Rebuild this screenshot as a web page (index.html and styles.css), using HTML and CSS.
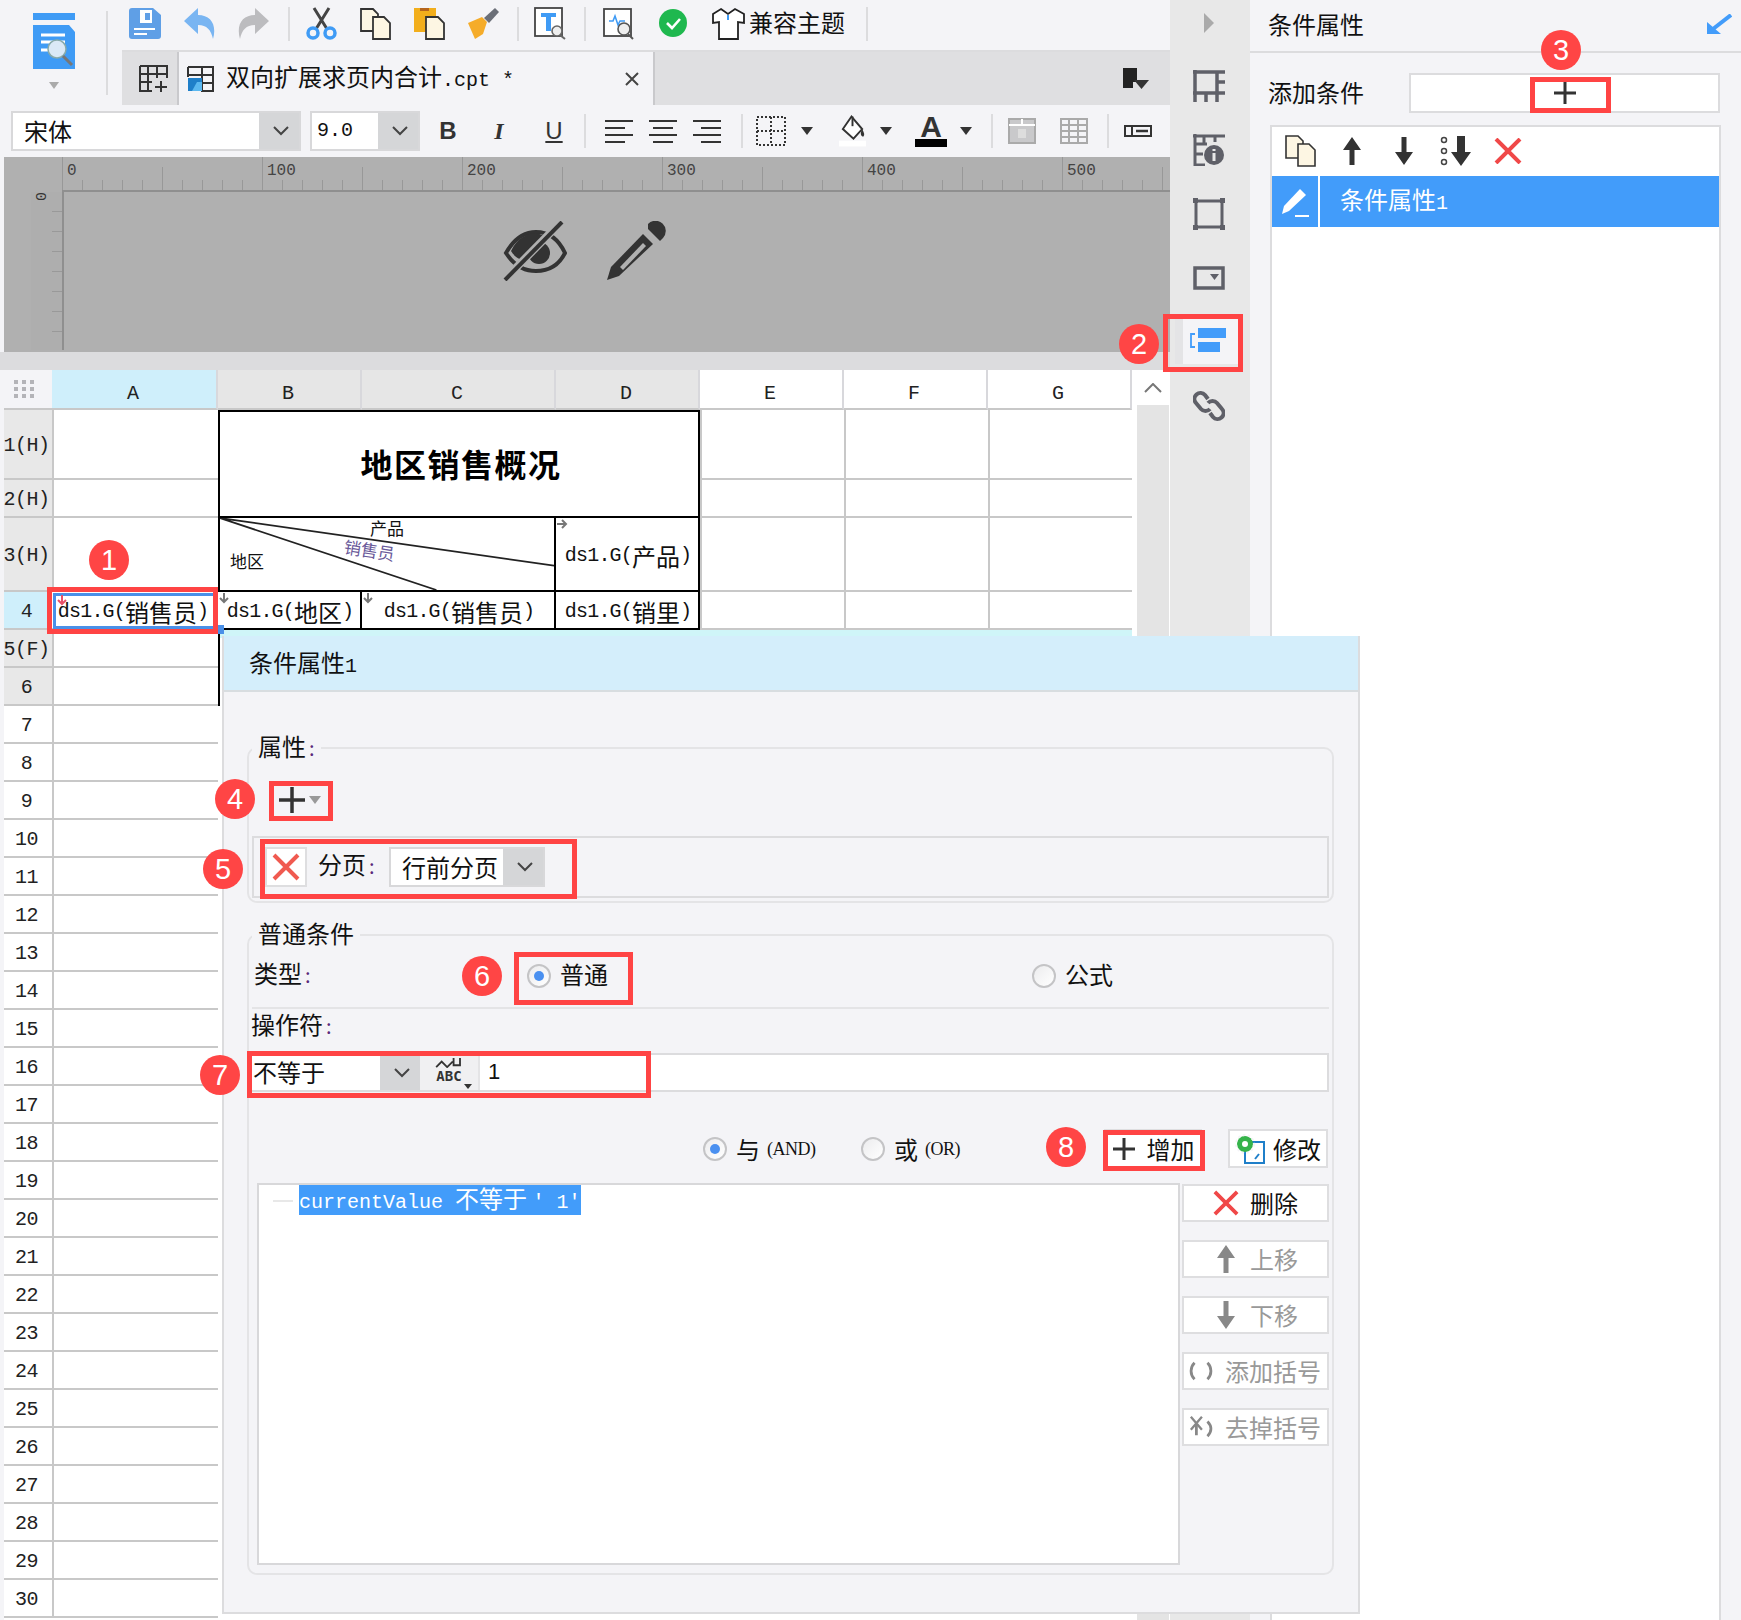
FILE: index.html
```html
<!DOCTYPE html>
<html lang="zh-CN">
<head>
<meta charset="utf-8">
<title>条件属性</title>
<link rel="stylesheet" href="styles.css">
</head>
<body>
<div class="app">
  <main class="left">
    <div class="top">
      <div class="logo-block">
        <div class="logo-col">
          <svg class="logo" viewBox="0 0 42 56"><rect width="42" height="7" fill="#3f9bf5"/><path d="M0 12h36l6 7v37H0z" fill="#3f9bf5"/><path d="M8 22h24M8 29h24M8 37h24" stroke="#fff" stroke-width="3"/><circle cx="24" cy="36" r="9" fill="#dbe9f6" stroke="#8aa" stroke-width="1.5"/><path d="M30 43l9 9" stroke="#777" stroke-width="3"/></svg>
          <span class="tri tri-light"></span>
        </div>
        <span class="sep sep-logo"></span>
      </div>
      <div class="top-main">
        <div class="toolbar">
          <svg class="ic" viewBox="0 0 33 33"><path d="M3 1h21l8 7v21a3 3 0 0 1-3 3H3a3 3 0 0 1-3-3V4a3 3 0 0 1 3-3z" fill="#5f9fe6"/><rect x="11" y="3" width="12" height="13" fill="#fff"/><rect x="16" y="6" width="5" height="7" fill="#5f9fe6"/><path d="M5 22h21M5 27h13" stroke="#fff" stroke-width="2.200"/></svg>
          <svg class="ic" viewBox="0 0 33 33"><path d="M15 1L1 14l14 13v-9c9 0 13 5 15 14 4-14-2-24-15-24z" fill="#79b5f2"/></svg>
          <svg class="ic" viewBox="0 0 33 33"><path d="M18 1l14 13-14 13v-9C9 18 5 23 3 32-1 18 5 8 18 8z" fill="#bcbcbf"/></svg>
          <span class="sep sep-a"></span>
          <svg class="ic" viewBox="0 0 33 33"><path d="M9 1l13 21M24 1L11 22" stroke="#444" stroke-width="3" fill="none"/><circle cx="8" cy="26" r="5" fill="none" stroke="#3f9bf5" stroke-width="3.500"/><circle cx="25" cy="26" r="5" fill="none" stroke="#3f9bf5" stroke-width="3.500"/></svg>
          <svg class="ic" viewBox="0 0 33 33"><path d="M2 2h12l5 5v17H2z" fill="#fdf6e3" stroke="#333" stroke-width="1.800"/><path d="M14 10h11l6 6v16H14z" fill="#fdf6e3" stroke="#333" stroke-width="1.800"/></svg>
          <svg class="ic" viewBox="0 0 33 33"><rect x="1" y="1" width="22" height="24" fill="#f2ae1c"/><rect x="7" y="1" width="9" height="3" fill="#b5651d"/><path d="M13 10h12l6 6v16H13z" fill="#fdf6e3" stroke="#333" stroke-width="1.800"/></svg>
          <svg class="ic" viewBox="0 0 33 33"><path d="M1 16l14-6 5 5-4 12-8 5z" fill="#f5ac2a"/><path d="M17 11L28 1l4 4-10 11z" fill="#6b6f78"/></svg>
          <span class="sep sep-b"></span>
          <svg class="ic" viewBox="0 0 33 33"><rect x="1" y="1" width="27" height="28" fill="#fff" stroke="#444" stroke-width="1.800"/><path d="M7 6h15v4h-5v14h-5V10H7z" fill="#3f9bf5"/><circle cx="23" cy="24" r="5" fill="#eee" stroke="#666" stroke-width="1.600"/><path d="M26 28l5 4" stroke="#666" stroke-width="2"/></svg>
          <span class="sep sep-b"></span>
          <svg class="ic ic-shift" viewBox="0 0 33 33"><rect x="1" y="2" width="27" height="27" fill="#fff" stroke="#444" stroke-width="1.800"/><path d="M6 14h4l2-5 3 9 2-4h5" fill="none" stroke="#3f9bf5" stroke-width="1.600"/><circle cx="21" cy="22" r="6" fill="#eee" stroke="#555" stroke-width="1.600"/><path d="M25 27l5 5" stroke="#555" stroke-width="2"/></svg>
          <svg class="ic" viewBox="0 0 33 33"><circle cx="16" cy="16" r="14" fill="#1fb84f"/><path d="M10 16l5 5 8-9" fill="none" stroke="#fff" stroke-width="2.600"/></svg>
          <svg class="ic ic-tight" viewBox="0 0 33 33"><path d="M9 2l7 5 7-5 9 5v9l-6-1v17H7V15l-6 1V7z" fill="#fff" stroke="#222" stroke-width="1.800"/><path d="M16 8v5" stroke="#3f9bf5" stroke-width="2"/></svg>
          <span class="tool-text">兼容主题</span>
          <span class="sep sep-c"></span>
        </div>
        <div class="tabs">
          <div class="tab-add"><svg class="ic-add" viewBox="0 0 30 28"><path d="M1 1h27v12M1 1v25h12M1 9h27M9 1v25M18 1v12M1 17h12" fill="none" stroke="#333" stroke-width="2"/><path d="M22 16v11M16 22h12" stroke="#333" stroke-width="2"/></svg></div>
          <div class="tab">
            <svg class="ic-file" viewBox="0 0 27 26"><path d="M1 1h25v24H15V1M1 9h25M15 17h11M1 1v10" fill="none" stroke="#333" stroke-width="2"/><path d="M1 12h14v13H1z" fill="#1f7fc9"/><path d="M5 25l5-9h5v9z" fill="#5bb8f0"/></svg>
            <span class="tab-name">双向扩展求页内合计<span class="m">.cpt *</span></span>
            <svg class="tab-close" viewBox="0 0 14 14"><path d="M1 1l12 12M13 1L1 13" stroke="#444" stroke-width="2"/></svg>
          </div>
          <svg class="tab-menu" viewBox="0 0 26 22"><path d="M0 0h14v14H10v6H0z" fill="#222"/><path d="M11 12h15l-7.500 9z" fill="#333"/></svg>
        </div>
      </div>
    </div>

    <div class="format">
      <div class="combo combo-font"><span class="combo-val">宋体</span><span class="combo-arrow"><svg class="chev" viewBox="0 0 16 10"><path d="M1 1l7 7 7-7" fill="none" stroke="#444" stroke-width="2"/></svg></span></div>
      <div class="combo combo-size"><span class="combo-val m">9.0</span><span class="combo-arrow"><svg class="chev" viewBox="0 0 16 10"><path d="M1 1l7 7 7-7" fill="none" stroke="#444" stroke-width="2"/></svg></span></div>
      <span class="fb fb-b">B</span>
      <span class="fb fb-i">I</span>
      <span class="fb fb-u">U</span>
      <span class="sep sep-f1"></span>
      <div class="aligns">
        <svg class="al" viewBox="0 0 30 24"><path d="M1 2h28M1 9h20M1 16h28M1 23h20" stroke="#333" stroke-width="2"/></svg>
        <svg class="al" viewBox="0 0 30 24"><path d="M1 2h28M5 9h20M1 16h28M5 23h20" stroke="#333" stroke-width="2"/></svg>
        <svg class="al" viewBox="0 0 30 24"><path d="M1 2h28M9 9h20M1 16h28M9 23h20" stroke="#333" stroke-width="2"/></svg>
      </div>
      <span class="sep sep-f2"></span>
      <svg class="ic-border" viewBox="0 0 30 30"><path d="M1 1h28v28H1zM15 1v28M1 15h28" fill="none" stroke="#333" stroke-width="2" stroke-dasharray="2 2"/></svg>
      <span class="tri tri-a"></span>
      <svg class="ic-bucket" viewBox="0 0 28 32"><path d="M13 1l11 13-9 10L4 14z" fill="#fff" stroke="#333" stroke-width="2"/><path d="M14 1v10" stroke="#333" stroke-width="2"/><path d="M24 14c2 4 3 6 1 8-3-1-3-4-1-8z" fill="#333"/><rect y="26" width="28" height="6" fill="#fff"/></svg>
      <span class="tri tri-b"></span>
      <span class="font-color"><span class="font-a">A</span><span class="font-bar"></span></span>
      <span class="tri tri-c"></span>
      <span class="sep sep-f3"></span>
      <svg class="ic-page" viewBox="0 0 28 26"><rect x="1" y="1" width="26" height="24" fill="#c9c9cb" stroke="#aaa" stroke-width="2"/><path d="M1 7h26M14 1v6" stroke="#fff" stroke-width="2"/><rect x="10" y="11" width="8" height="9" fill="#ddd"/></svg>
      <svg class="ic-table" viewBox="0 0 28 26"><path d="M1 1h26v24H1zM1 7h26M1 13h26M1 19h26M9 1v24M18 1v24" fill="none" stroke="#aaa" stroke-width="2"/></svg>
      <span class="sep sep-f4"></span>
      <svg class="ic-field" viewBox="0 0 28 12"><rect x="1" y="1" width="26" height="10" fill="none" stroke="#333" stroke-width="2"/><path d="M8 1v10" stroke="#333" stroke-width="2"/><path d="M12 6h12" stroke="#333" stroke-width="2.500"/></svg>
    </div>

    <section class="canvas">
      <div class="ruler-h">
        <span class="rl m">0</span><span class="rl m">100</span><span class="rl m">200</span><span class="rl m">300</span><span class="rl m">400</span><span class="rl m">500</span>
      </div>
      <div class="canvas-body">
        <div class="ruler-v"><span class="rv0 m">0</span></div>
        <div class="canvas-icons">
          <svg class="ic-eye" viewBox="0 0 64 60"><path d="M3 32C12 16 22 11 33 11s22 6 29 21C55 46 44 50 33 50S12 46 3 32z" fill="none" stroke="#333" stroke-width="4"/><path d="M8 30C14 17 24 12 34 12l10 4-24 24C14 37 10 34 8 30z" fill="#333"/><circle cx="36" cy="32" r="11" fill="#333"/><path d="M1 59L58 1" stroke="#b0b0b0" stroke-width="8"/><path d="M2 59L59 1" stroke="#333" stroke-width="4"/></svg>
          <svg class="ic-pen" viewBox="0 0 60 60"><path d="M42 3a8 8 0 0 1 15 14l-3 3-12-12z" fill="#333"/><path d="M37 13l10 10L13 55 1 59l4-13z" fill="#333"/><path d="M37 22l3 3-23 24-3-3z" fill="#b0b0b0"/></svg>
        </div>
      </div>
      <div class="strip"></div>
    </section>

    <section class="sheet">
      <div class="grid">
        <div class="corner"><svg class="dots" viewBox="0 0 20 18"><path d="M0 0h4v4H0zM8 0h4v4H8zM16 0h4v4h-4zM0 7h4v4H0zM8 7h4v4H8zM16 7h4v4h-4zM0 14h4v4H0zM8 14h4v4H8zM16 14h4v4h-4z" fill="#b4b4b8"/></svg></div>
        <div class="ch ch-on m">A</div><div class="ch m">B</div><div class="ch m">C</div><div class="ch m">D</div><div class="ch ch-plain m">E</div><div class="ch ch-plain m">F</div><div class="ch ch-plain m">G</div>

        <div class="title">地区销售概况</div>
        <div class="under"></div>

        <div class="rh m">1(H)</div><div class="c"></div><div class="c"></div><div class="c"></div><div class="c"></div>
        <div class="rh m">2(H)</div><div class="c"></div><div class="c"></div><div class="c"></div><div class="c"></div>
        <div class="rh m">3(H)</div><div class="c"></div>
        <div class="diag">
          <svg class="diag-lines" viewBox="0 0 338 74" preserveAspectRatio="none"><path d="M0 0L338 49M0 0L219 74" stroke="#222" stroke-width="1.800" fill="none"/></svg>
          <span class="d-prod">产品</span><span class="d-sale">销售员</span><span class="d-area">地区</span>
        </div>
        <div class="bc"><svg class="mark" viewBox="0 0 12 12"><path d="M1 6h8M6 2l4 4-4 4" fill="none" stroke="#777" stroke-width="2"/></svg><span class="m">ds1.G(</span>产品<span class="m">)</span></div><div class="c"></div><div class="c"></div><div class="c"></div>

        <div class="rh rh-on m">4</div>
        <div class="c c-sel"><svg class="mark mark-red" viewBox="0 0 12 12"><path d="M6 1v8M2 6l4 4 4-4" fill="none" stroke="#e8506a" stroke-width="2"/></svg><span class="m">ds1.G(</span>销售员<span class="m">)</span></div>
        <div class="bc"><svg class="mark" viewBox="0 0 12 12"><path d="M6 1v8M2 6l4 4 4-4" fill="none" stroke="#777" stroke-width="2"/></svg><span class="m">ds1.G(</span>地区<span class="m">)</span></div>
        <div class="bc"><svg class="mark" viewBox="0 0 12 12"><path d="M6 1v8M2 6l4 4 4-4" fill="none" stroke="#777" stroke-width="2"/></svg><span class="m">ds1.G(</span>销售员<span class="m">)</span></div>
        <div class="bc"><span class="m">ds1.G(</span>销里<span class="m">)</span></div>
        <div class="c"></div><div class="c"></div><div class="c"></div>

        <div class="rh m">5(F)</div><div class="c"></div>
        <div class="rh m">6</div><div class="c"></div>
        <div class="rh rh-w m">7</div><div class="c"></div>
        <div class="rh rh-w m">8</div><div class="c"></div>
        <div class="rh rh-w m">9</div><div class="c"></div>
        <div class="rh rh-w m">10</div><div class="c"></div>
        <div class="rh rh-w m">11</div><div class="c"></div>
        <div class="rh rh-w m">12</div><div class="c"></div>
        <div class="rh rh-w m">13</div><div class="c"></div>
        <div class="rh rh-w m">14</div><div class="c"></div>
        <div class="rh rh-w m">15</div><div class="c"></div>
        <div class="rh rh-w m">16</div><div class="c"></div>
        <div class="rh rh-w m">17</div><div class="c"></div>
        <div class="rh rh-w m">18</div><div class="c"></div>
        <div class="rh rh-w m">19</div><div class="c"></div>
        <div class="rh rh-w m">20</div><div class="c"></div>
        <div class="rh rh-w m">21</div><div class="c"></div>
        <div class="rh rh-w m">22</div><div class="c"></div>
        <div class="rh rh-w m">23</div><div class="c"></div>
        <div class="rh rh-w m">24</div><div class="c"></div>
        <div class="rh rh-w m">25</div><div class="c"></div>
        <div class="rh rh-w m">26</div><div class="c"></div>
        <div class="rh rh-w m">27</div><div class="c"></div>
        <div class="rh rh-w m">28</div><div class="c"></div>
        <div class="rh rh-w m">29</div><div class="c"></div>
        <div class="rh rh-w m">30</div><div class="c"></div>
      </div>
      <div class="vscroll">
        <div class="vs-up"><svg class="vs-chev" viewBox="0 0 18 10"><path d="M1 9l8-8 8 8" fill="none" stroke="#777" stroke-width="2"/></svg></div>
        <div class="vs-track"></div>
      </div>
    </section>
  </main>

  <nav class="sidebar">
    <span class="side-tri"></span>
    <div class="side-item"><svg class="side-ic" viewBox="0 0 32 32"><path d="M0 2h32M2 0v32M0 23h32M24 2v21M24 12h8M13 23v9M24 23v9" fill="none" stroke="#5f6068" stroke-width="3.500"/></svg></div>
    <div class="side-item"><svg class="side-ic" viewBox="0 0 32 32"><path d="M0 2h32M2 0v31h10M2 10h12M2 20h8M11 2v8M22 2v6" fill="none" stroke="#5f6068" stroke-width="3"/><circle cx="21" cy="21" r="10" fill="#5f6068"/><path d="M21 15v2M21 19v8" stroke="#e8e8e8" stroke-width="3"/></svg></div>
    <div class="side-item"><svg class="side-ic" viewBox="0 0 32 32"><rect x="3" y="3" width="26" height="26" fill="none" stroke="#5f6068" stroke-width="3"/><path d="M0 0h5v5H0zM27 0h5v5h-5zM0 27h5v5H0zM27 27h5v5h-5z" fill="#5f6068"/></svg></div>
    <div class="side-item"><svg class="side-ic-wide" viewBox="0 0 32 24"><rect x="2" y="2" width="28" height="20" fill="none" stroke="#5f6068" stroke-width="3.500"/><path d="M17 8h9l-4.500 6z" fill="#5f6068"/></svg></div>
    <div class="side-item"><div class="side-active"><svg class="side-ic-blue" viewBox="0 0 36 24"><rect x="8" y="0" width="28" height="10" fill="#429cfa"/><rect x="8" y="14" width="22" height="10" fill="#429cfa"/><path d="M5 6H1v13h4" fill="none" stroke="#429cfa" stroke-width="1.800"/></svg></div></div>
    <div class="side-item"><svg class="side-ic" viewBox="0 0 32 32"><path d="M15 9l-3-4a6 6 0 0 0-9 8l5 6a6 6 0 0 0 9 0" fill="none" stroke="#5f6068" stroke-width="4"/><path d="M17 23l3 4a6 6 0 0 0 9-8l-5-6a6 6 0 0 0-9 0" fill="none" stroke="#5f6068" stroke-width="4"/></svg></div>
  </nav>

  <aside class="panel">
    <header class="panel-head"><span>条件属性</span><svg class="ic-pin" viewBox="0 0 26 20"><path d="M25 1L7 15" stroke="#429cfa" stroke-width="4"/><path d="M1 8v12h14z" fill="#429cfa"/></svg></header>
    <div class="panel-add"><span>添加条件</span><div class="add-input"><svg class="plus-sm" viewBox="0 0 24 24"><path d="M12 1v22M1 12h22" stroke="#333" stroke-width="3"/></svg></div></div>
    <div class="panel-list">
      <div class="list-tools">
        <svg class="lt-copy" viewBox="0 0 32 33"><path d="M2 2h12l5 5v17H2z" fill="#fdf6e3" stroke="#333" stroke-width="1.600"/><path d="M14 10h11l6 6v16H14z" fill="#fdf6e3" stroke="#333" stroke-width="1.600"/></svg>
        <svg class="lt-arrow lt-up" viewBox="0 0 20 28"><path d="M10 0l9 13h-6.500v15h-5V13H1z" fill="#333"/></svg>
        <svg class="lt-arrow lt-down" viewBox="0 0 20 28"><path d="M10 28l9-13h-6.500V0h-5v15H1z" fill="#333"/></svg>
        <svg class="lt-bottom" viewBox="0 0 32 30"><circle cx="4" cy="4" r="2.500" fill="none" stroke="#444" stroke-width="1.500"/><circle cx="4" cy="15" r="2.500" fill="none" stroke="#444" stroke-width="1.500"/><circle cx="4" cy="26" r="2.500" fill="none" stroke="#444" stroke-width="1.500"/><path d="M21 30l10-14h-6V0h-8v16h-6z" fill="#333"/></svg>
        <svg class="lt-x" viewBox="0 0 28 26"><path d="M2 1l24 24M26 1L2 25" stroke="#f04848" stroke-width="4"/></svg>
      </div>
      <div class="list-row">
        <div class="row-edit"><svg class="ic-edit" viewBox="0 0 28 32"><path d="M19 3l6 6L8 25l-7 3 2-8z" fill="#fff"/><path d="M14 30h14" stroke="#fff" stroke-width="2"/></svg></div>
        <div class="row-text">条件属性<span class="m">1</span></div>
      </div>
    </div>
  </aside>

  <section class="dialog">
    <header class="dlg-head">条件属性<span class="m">1</span></header>
    <div class="dlg-body">
      <fieldset class="fs">
        <legend class="lg">属性<span class="colon">:</span></legend>
        <div class="add-row"><svg class="plus-md" viewBox="0 0 28 28"><path d="M14 1v26M1 14h26" stroke="#333" stroke-width="3.500"/></svg><span class="tri tri-gray"></span></div>
        <div class="attr-row">
          <div class="x-btn"><svg class="x-ic" viewBox="0 0 28 28"><path d="M2 2l24 24M26 2L2 26" stroke="#f05a50" stroke-width="4"/></svg></div>
          <span class="attr-label">分页<span class="colon">:</span></span>
          <div class="combo combo-page"><span class="combo-val">行前分页</span><span class="combo-arrow"><svg class="chev" viewBox="0 0 16 10"><path d="M1 1l7 7 7-7" fill="none" stroke="#444" stroke-width="2"/></svg></span></div>
        </div>
      </fieldset>

      <fieldset class="fs fs2">
        <legend class="lg">普通条件</legend>
        <div class="type-row">
          <span class="type-label">类型<span class="colon">:</span></span>
          <label class="radio-item radio-a"><span class="radio radio-on"></span>普通</label>
          <label class="radio-item"><span class="radio"></span>公式</label>
        </div>
        <div class="op-label">操作符<span class="colon">:</span></div>
        <div class="input-row">
          <div class="combo combo-op"><span class="combo-val combo-val-flush">不等于</span><span class="combo-arrow"><svg class="chev" viewBox="0 0 16 10"><path d="M1 1l7 7 7-7" fill="none" stroke="#444" stroke-width="2"/></svg></span></div>
          <div class="abc"><svg class="abc-top" viewBox="0 0 30 12"><path d="M1 11l6-6 6 6 6-6M20 1v8h7V1" fill="none" stroke="#333" stroke-width="2"/></svg><span class="abc-t">ABC</span><span class="tri tri-mini"></span></div>
          <div class="val-input">1</div>
        </div>
        <div class="logic-row">
          <label class="radio-item logic-and"><span class="radio radio-on"></span>与<span class="m-sm">(AND)</span></label>
          <label class="radio-item logic-or"><span class="radio"></span>或<span class="m-sm">(OR)</span></label>
          <button class="btn btn-add"><svg class="btn-plus" viewBox="0 0 24 24"><path d="M12 1v22M1 12h22" stroke="#333" stroke-width="3"/></svg>增加</button>
          <button class="btn btn-edit"><svg class="btn-gear" viewBox="0 0 30 30"><rect x="10" y="8" width="19" height="21" fill="#fff" stroke="#1f7fc9" stroke-width="2"/><circle cx="10" cy="10" r="8" fill="#35b34a"/><circle cx="10" cy="10" r="9" fill="none" stroke="#f4f4f7" stroke-width="2" stroke-dasharray="2.500 2.500"/><circle cx="10" cy="10" r="3" fill="#fff"/><path d="M20 25l4-5" stroke="#1f7fc9" stroke-width="2"/></svg>修改</button>
        </div>
        <div class="cond-row">
          <div class="tree">
            <span class="tree-dash"></span><span class="tree-sel"><span class="m">currentValue </span>不等于 <span class="m">' 1'</span></span>
          </div>
          <div class="side-btns">
            <button class="btn sb"><svg class="sb-x" viewBox="0 0 28 28"><path d="M2 2l24 24M26 2L2 26" stroke="#f04848" stroke-width="4"/></svg>删除</button>
            <button class="btn sb sb-off"><svg class="sb-arrow" viewBox="0 0 20 28"><path d="M10 0l9 13h-6.500v15h-5V13H1z" fill="#888"/></svg>上移</button>
            <button class="btn sb sb-off"><svg class="sb-arrow" viewBox="0 0 20 28"><path d="M10 28l9-13h-6.500V0h-5v15H1z" fill="#888"/></svg>下移</button>
            <button class="btn sb sb-off sb-tight"><svg class="sb-paren" viewBox="0 0 26 22"><path d="M6 2C1 7 1 15 6 20M20 2c5 5 5 13 0 18" fill="none" stroke="#888" stroke-width="3"/></svg>添加括号</button>
            <button class="btn sb sb-off sb-tight"><svg class="sb-paren" viewBox="0 0 26 26"><path d="M2 2l12 14M14 2L2 16" stroke="#888" stroke-width="2.500"/><path d="M8 10v12M20 7c5 5 5 11 0 16" fill="none" stroke="#888" stroke-width="3"/></svg>去掉括号</button>
          </div>
        </div>
      </fieldset>
    </div>
  </section>

  <div class="handle"></div>
  <div class="red r1"></div><div class="red r2"></div><div class="red r3"></div><div class="red r4"></div>
  <div class="red r5"></div><div class="red r6"></div><div class="red r7"></div><div class="red r8"></div>
  <span class="badge b1">1</span><span class="badge b2">2</span><span class="badge b3">3</span><span class="badge b4">4</span>
  <span class="badge b5">5</span><span class="badge b6">6</span><span class="badge b7">7</span><span class="badge b8">8</span>
</div>
</body>
</html>
```

FILE: styles.css
```css
* { box-sizing: border-box; }
html, body { margin: 0; padding: 0; }
body { font-family: "Noto Sans CJK SC", "Liberation Sans", sans-serif; font-size: 24px; color: #111; background: #f4f4f7; }
svg { display: block; flex: none; }
.m { font-family: "Liberation Mono", "Noto Sans CJK SC", monospace; font-size: 20px; }
.m-sm { font-family: "Liberation Serif", "Noto Sans CJK SC", serif; font-size: 18px; letter-spacing: -0.500px; margin-left: -2px; }
.colon { color: #5b2a7a; margin-left: 3px; font-size: 20px; }

.app { position: relative; width: 1741px; height: 1620px; overflow: hidden; display: grid; grid-template-columns: 1170px 80px 491px; background: #f4f4f7; }

/* left column */
.left { min-width: 0; display: flex; flex-direction: column; height: 1620px; overflow: hidden; }
.top { display: flex; height: 105px; }
.logo-block { width: 122px; display: flex; padding-left: 33px; }
.logo-col { width: 73px; padding-top: 13px; display: flex; flex-direction: column; }
.logo { width: 42px; height: 56px; }
.tri-light { margin: 13px 0 0 16px; }
.sep { display: block; flex: none; width: 2px; background: #dcdcde; }
.sep-logo { height: 84px; margin-top: 11px; }
.top-main { flex: 1; display: flex; flex-direction: column; }
.toolbar { height: 50px; padding: 7px 0 0 7px; display: flex; align-items: flex-start; }
.ic { width: 33px; height: 33px; margin-right: 21px; }
.ic-shift { margin-left: 2px; }
.ic-tight { margin-right: 4px; margin-left: 1px; }
.sep-a, .sep-b, .sep-c { height: 34px; }
.sep-a { margin: 0 15px 0 -3px; }
.sep-b { margin: 0 15px 0 -4px; }
.sep-c { margin-left: 21px; }
.tool-text { line-height: 30px; }
.tabs { height: 55px; background: #dfdfe1; border-top: 2px solid #dcdcde; display: flex; align-items: center; padding-right: 21px; }
.tab-add { width: 55px; height: 53px; display: flex; align-items: center; padding-left: 17px; }
.ic-add { width: 30px; height: 28px; }
.tab { width: 478px; height: 53px; background: #f4f4f7; border-left: 2px solid #c9c9cc; border-right: 2px solid #c9c9cc; display: flex; align-items: center; padding: 0 14px 0 8px; }
.ic-file { width: 27px; height: 26px; }
.tab-name { margin-left: 12px; flex: 1; white-space: nowrap; line-height: 30px; }
.tab-close { width: 14px; height: 14px; }
.tab-menu { width: 26px; height: 22px; margin-left: auto; }

.format { height: 52px; display: flex; align-items: center; padding-left: 11px; }
.combo { display: flex; height: 40px; background: #fff; border: 2px solid #d8d8da; }
.combo-val { flex: 1; padding-left: 11px; line-height: 36px; white-space: nowrap; }
.combo-arrow { width: 40px; flex: none; background: #d5d6d8; display: flex; align-items: center; justify-content: center; padding-left: 3px; }
.chev { width: 16px; height: 10px; }
.combo-font { width: 290px; }
.combo-size { width: 110px; margin-left: 9px; }
.combo-size .combo-val { padding-left: 5px; }
.fb { width: 30px; text-align: center; font-family: "Liberation Sans", sans-serif; color: #333; line-height: 30px; flex: none; }
.fb-b { font-weight: 700; margin-left: 13px; }
.fb-i { font-family: "Liberation Serif", serif; font-style: italic; margin-left: 21px; font-weight: 700; }
.fb-u { text-decoration: underline; margin-left: 25px; }
.sep-f1, .sep-f2, .sep-f3, .sep-f4 { height: 34px; }
.sep-f1 { margin-left: 15px; }
.aligns { display: flex; gap: 14px; margin-left: 18px; }
.al { width: 30px; height: 24px; }
.sep-f2 { margin-left: 19px; }
.ic-border { width: 30px; height: 30px; margin-left: 13px; }
.tri { display: block; flex: none; width: 0; height: 0; border-left: 6px solid transparent; border-right: 6px solid transparent; border-top: 8px solid #333; }
.tri-light { border-top-color: #aaa; border-left-width: 5px; border-right-width: 5px; border-top-width: 7px; }
.tri-a { margin-left: 15px; }
.ic-bucket { width: 27px; height: 32px; margin-left: 26px; }
.tri-b { margin-left: 14px; }
.font-color { width: 32px; margin-left: 23px; display: flex; flex-direction: column; align-items: center; flex: none; }
.font-a { font-family: "Liberation Sans", sans-serif; font-weight: 700; font-size: 30px; line-height: 24px; color: #333; }
.font-bar { width: 32px; height: 8px; background: #000; }
.tri-c { margin-left: 13px; }
.sep-f3 { margin-left: 19px; }
.ic-page { width: 28px; height: 26px; margin-left: 15px; }
.ic-table { width: 28px; height: 26px; margin-left: 24px; }
.sep-f4 { margin-left: 19px; }
.ic-field { width: 28px; height: 12px; margin-left: 15px; }

/* ruler canvas */
.canvas { margin-left: 4px; height: 213px; display: flex; flex-direction: column; background: #b0b0b0; }
.ruler-h { height: 35px; margin-left: 58px; display: flex; border-bottom: 2px solid #8f8f8f;
  background:
    repeating-linear-gradient(90deg, #989898 0 1px, transparent 1px 200px) 0 0 / 100% 33px no-repeat,
    repeating-linear-gradient(90deg, #989898 0 1px, transparent 1px 100px) 0 100% / 100% 23px no-repeat,
    repeating-linear-gradient(90deg, #989898 0 1px, transparent 1px 20px) 0 100% / 100% 10px no-repeat;
}
.rl { width: 200px; flex: none; padding: 4px 0 0 5px; font-size: 16px; line-height: 20px; color: #444; }
.canvas-body { flex: 1; display: flex; min-height: 0; }
.ruler-v { width: 33px; margin-left: 27px; height: 158px; border-right: 2px solid #8f8f8f; background: #aeaeae repeating-linear-gradient(180deg, transparent 0 19px, #999 19px 20px) 100% 0 / 10px 100% no-repeat; position: relative; }
.rv0 { display: block; transform: rotate(90deg); font-size: 15px; line-height: 16px; width: 12px; margin: -2px 0 0 2px; color: #333; }
.canvas-icons { display: flex; gap: 39px; padding: 29px 0 0 439px; }
.ic-eye { width: 64px; height: 60px; }
.ic-pen { width: 60px; height: 60px; }
.strip { height: 18px; margin-left: -4px; background: #dcdcde; }

/* sheet */
.sheet { flex: 1; margin-left: 4px; display: flex; min-height: 0; background: #fff; }
.grid { width: 1128px; display: grid; flex: none; grid-template-columns: 48px 166px 144px 194px 144px 144px 144px 144px; grid-template-rows: 40px 70px 38px 74px; grid-auto-rows: 38px; }
.corner { background: #f4f4f7; border-bottom: 2px solid #c8c8c8; display: flex; align-items: center; justify-content: center; padding-right: 8px; }
.dots { width: 20px; height: 18px; }
.ch { background: #e6e6e6; border-right: 2px solid #d8d8dc; border-bottom: 2px solid #c8c8c8; display: flex; align-items: center; justify-content: center; color: #222; padding: 8px 2px 0 0; }
.ch-on { background: #cfeffb; }
.ch-plain { background: #fff; }
.rh { background: #e8e8e8; border-bottom: 2px solid #c8c8c8; display: flex; align-items: center; justify-content: center; color: #222; letter-spacing: -0.500px; white-space: nowrap; padding: 2px 3px 0 0; }
.rh-on { background: #cfeffb; }
.rh-w { background: #fff; }
.c { position: relative; border-left: 2px solid #c8c8c8; border-bottom: 2px solid #c8c8c8; min-width: 0; }
.title { grid-column: 3 / 6; grid-row: 2 / 4; border: 2px solid #000; display: flex; align-items: center; justify-content: center; font-size: 32px; font-weight: 700; color: #000; letter-spacing: 1.500px; padding: 0 0 2px 4px; }
.under { grid-column: 3 / 9; grid-row: 6 / 32; background: linear-gradient(#000, #000) 0 0 / 2px 76px no-repeat, linear-gradient(#cff5f8, #cff5f8) 0 0 / 100% 8px no-repeat, #fff; }
.diag { grid-column: 3 / 5; position: relative; border: 2px solid #000; border-top: 0; }
.diag-lines { position: absolute; inset: 0; width: 100%; height: 100%; }
.d-prod, .d-sale, .d-area { position: absolute; font-size: 17px; line-height: 20px; white-space: nowrap; }
.d-prod { left: 150px; top: 0; }
.d-sale { left: 124px; top: 22px; transform: rotate(9deg); color: #6a5a9a; }
.d-area { left: 10px; top: 33px; }
.bc { position: relative; border-right: 2px solid #000; border-bottom: 2px solid #000; display: flex; align-items: center; justify-content: center; white-space: nowrap; padding: 2px 0 0 2px; }
.bc .m, .c-sel .m { letter-spacing: -0.800px; }
.c-sel { display: flex; align-items: center; justify-content: center; white-space: nowrap; border-left: 0; padding: 2px 4px 0 0; outline: 3px solid #4a90e8; outline-offset: -4px; }
.mark { position: absolute; left: 0; top: 0; width: 12px; height: 12px; }
.mark-red { left: 4px; top: 2px; }
.vscroll { width: 38px; padding: 3px 1px 0 5px; display: flex; flex-direction: column; background: #fff; }
.vs-up { height: 29px; display: flex; align-items: center; justify-content: center; }
.vs-chev { width: 18px; height: 10px; }
.vs-track { flex: 1; margin-top: 3px; background: #e4e4e4; }

/* sidebar */
.sidebar { background: #e8e8e8; position: relative; display: flex; flex-direction: column; align-items: center; padding-top: 13px; }
.side-tri { display: block; width: 0; height: 0; border-top: 10px solid transparent; border-bottom: 10px solid transparent; border-left: 10px solid #aaa; margin-bottom: 21px; margin-left: -3px; }
.side-item { height: 64px; flex: none; width: 100%; display: flex; align-items: center; justify-content: center; padding-right: 2px; }
.side-ic { width: 32px; height: 32px; }
.side-ic-wide { width: 32px; height: 24px; }
.side-active { width: 68px; height: 48px; margin-bottom: 4px; background: linear-gradient(90deg, #e4e4e6 0 8px, #f4f4f7 8px); display: flex; align-items: center; justify-content: center; padding-right: 2px; }
.side-ic-blue { width: 36px; height: 24px; }

/* right panel */
.panel { background: #f4f4f7; display: flex; flex-direction: column; padding-left: 20px; }
.panel-head { height: 53px; margin-left: -20px; padding: 0 9px 4px 18px; border-bottom: 2px solid #dcdcde; display: flex; align-items: center; justify-content: space-between; line-height: 30px; }
.ic-pin { width: 26px; height: 20px; }
.panel-add { display: flex; align-items: center; margin-top: 20px; height: 40px; margin-left: -2px; }
.panel-add > span { width: 141px; flex: none; line-height: 30px; padding-bottom: 2px; }
.add-input { width: 311px; height: 40px; background: #fff; border: 2px solid #dcdcde; display: flex; align-items: center; justify-content: center; }
.plus-sm { width: 24px; height: 24px; }
.panel-list { width: 451px; margin-top: 12px; flex: 1; background: #fff; border: 2px solid #dcdcde; border-bottom: 0; }
.list-tools { height: 49px; display: flex; align-items: center; padding: 0 0 2px 12px; }
.lt-copy { width: 32px; height: 33px; }
.lt-arrow { width: 20px; height: 28px; }
.lt-up { margin-left: 26px; }
.lt-down { margin-left: 32px; }
.lt-bottom { width: 32px; height: 30px; margin-left: 26px; }
.lt-x { width: 28px; height: 26px; margin-left: 22px; }
.list-row { height: 51px; background: #429cfa; display: flex; color: #fff; }
.row-edit { width: 48px; height: 100%; border-right: 2px solid #fff; display: flex; align-items: center; justify-content: center; flex: none; }
.ic-edit { width: 28px; height: 32px; }
.row-text { padding-left: 20px; line-height: 46px; }

/* dialog */
.dialog { position: absolute; left: 222px; top: 636px; width: 1138px; height: 978px; background: #f4f4f7; border-left: 2px solid #dcdcde; border-right: 2px solid #dcdcde; border-bottom: 2px solid #dcdcde; }
.dlg-head { height: 56px; padding-left: 25px; background: #d4eefb; border-bottom: 2px solid #d8dde0; line-height: 52px; }
.dlg-body { padding: 40px 0 0 23px; }
.fs { margin: 0; width: 1087px; min-width: 0; padding: 0 3px 3px; border: 2px solid #e4e4e6; border-radius: 10px; }
.fs2 { margin-top: 16px; padding-bottom: 8px; }
.lg { margin-left: 0; padding: 0 6px; line-height: 28px; height: 32px; white-space: nowrap; }
.add-row { height: 72px; display: flex; align-items: center; padding-left: 26px; }
.plus-md { width: 28px; height: 28px; }
.tri-gray { border-top-color: #999; border-left-width: 6px; border-right-width: 6px; margin-left: 3px; }
.attr-row { height: 62px; width: 1077px; border: 2px solid #dcdcde; display: flex; align-items: center; padding-left: 11px; }
.x-btn { width: 42px; height: 40px; border: 2px solid #dedee0; background: #fff; display: flex; align-items: center; justify-content: center; flex: none; }
.x-ic { width: 28px; height: 28px; }
.attr-label { margin-left: 11px; width: 71px; flex: none; line-height: 30px; white-space: nowrap; padding-bottom: 4px; }
.combo-page { width: 156px; }
.type-row { height: 58px; border-bottom: 2px solid #e4e4e6; display: flex; align-items: center; padding: 0 0 10px 2px; }
.type-label { width: 273px; flex: none; line-height: 30px; }
.radio-item { display: inline-flex; align-items: center; gap: 9px; flex: none; white-space: nowrap; line-height: 30px; }
.radio-a { width: 505px; }
.type-row .radio { margin-top: 3px; }
.radio { display: block; flex: none; width: 24px; height: 24px; border-radius: 50%; border: 2px solid #c4c4c6; background: linear-gradient(135deg, #ececee, #fff); position: relative; }
.radio-on::after { content: ""; position: absolute; left: 5px; top: 5px; width: 10px; height: 10px; border-radius: 50%; background: #4a90f0; }
.op-label { height: 44px; line-height: 30px; margin-left: -1px; }
.input-row { height: 39px; display: flex; background: #fff; border: 2px solid #dcdcde; border-left: 0; }
.combo-op { width: 168px; height: 35px; border: 0; flex: none; }
.combo-val-flush { padding-left: 1px; line-height: 33px; }
.abc { width: 58px; background: #f0f0f2; position: relative; flex: none; display: flex; flex-direction: column; align-items: center; }
.abc-top { width: 28px; height: 11px; margin-top: 2px; }
.abc-t { font-family: "DejaVu Sans Mono", monospace; font-size: 14px; line-height: 16px; font-weight: 700; color: #333; }
.tri-mini { position: absolute; right: 6px; bottom: 1px; border-left-width: 4px; border-right-width: 4px; border-top-width: 5px; }
.val-input { padding-left: 8px; font-family: "Liberation Sans", sans-serif; font-size: 22px; line-height: 33px; color: #111; border-left: 2px solid #e4e4e6; flex: 1; }
.logic-row { display: flex; align-items: center; height: 39px; margin-top: 37px; padding-left: 451px; }
.logic-and { width: 158px; }
.logic-or { width: 243px; }
.btn { font: inherit; color: #111; background: #fff; border: 2px solid #dedee0; padding: 0; display: flex; align-items: center; justify-content: center; line-height: 30px; white-space: nowrap; }
.btn-add { width: 98px; height: 39px; gap: 11px; margin-right: 26px; background: #fff; }
.btn-plus { width: 24px; height: 24px; }
.btn-edit { width: 100px; height: 39px; gap: 8px; }
.btn-gear { width: 30px; height: 30px; }
.cond-row { display: flex; margin-top: 15px; }
.tree { width: 923px; height: 382px; margin-left: 5px; background: #fff; border: 2px solid #d8d8da; display: flex; align-items: flex-start; padding: 0 0 0 14px; flex: none; }
.tree-dash { display: block; width: 20px; height: 2px; background: #e8e8e8; margin: 15px 6px 0 0; flex: none; }
.tree-sel { background: #429cfa; color: #fff; height: 30px; width: 282px; line-height: 25px; white-space: pre; }
.side-btns { display: flex; flex-direction: column; gap: 18px; margin: 1px 0 0 2px; }
.sb { width: 147px; height: 38px; gap: 11px; justify-content: flex-start; padding-left: 29px; }
.sb-x { width: 26px; height: 26px; }
.sb-off { color: #999; }
.sb-arrow { width: 20px; height: 28px; margin: 0 3px; }
.sb-tight { gap: 12px; padding-left: 5px; }
.sb-paren { width: 24px; height: 24px; }

/* annotations */
.handle { position: absolute; left: 218px; top: 625px; width: 6px; height: 9px; background: #4a90e8; }
.red { position: absolute; border: 5px solid #ff4444; }
.r1 { left: 47px; top: 587px; width: 171px; height: 47px; }
.r2 { left: 1163px; top: 314px; width: 80px; height: 58px; }
.r3 { left: 1530px; top: 77px; width: 81px; height: 36px; }
.r4 { left: 269px; top: 781px; width: 64px; height: 40px; }
.r5 { left: 260px; top: 839px; width: 317px; height: 60px; }
.r6 { left: 514px; top: 952px; width: 119px; height: 53px; }
.r7 { left: 247px; top: 1051px; width: 404px; height: 47px; }
.r8 { left: 1103px; top: 1130px; width: 102px; height: 41px; }
.badge { position: absolute; width: 40px; height: 40px; border-radius: 50%; background: #ff4545; color: #fff; font-family: "Liberation Sans", sans-serif; font-size: 29px; line-height: 40px; text-align: center; }
.b1 { left: 89px; top: 540px; }
.b2 { left: 1119px; top: 324px; }
.b3 { left: 1541px; top: 30px; }
.b4 { left: 215px; top: 779px; }
.b5 { left: 203px; top: 849px; }
.b6 { left: 462px; top: 956px; }
.b7 { left: 200px; top: 1055px; }
.b8 { left: 1046px; top: 1127px; }
```
